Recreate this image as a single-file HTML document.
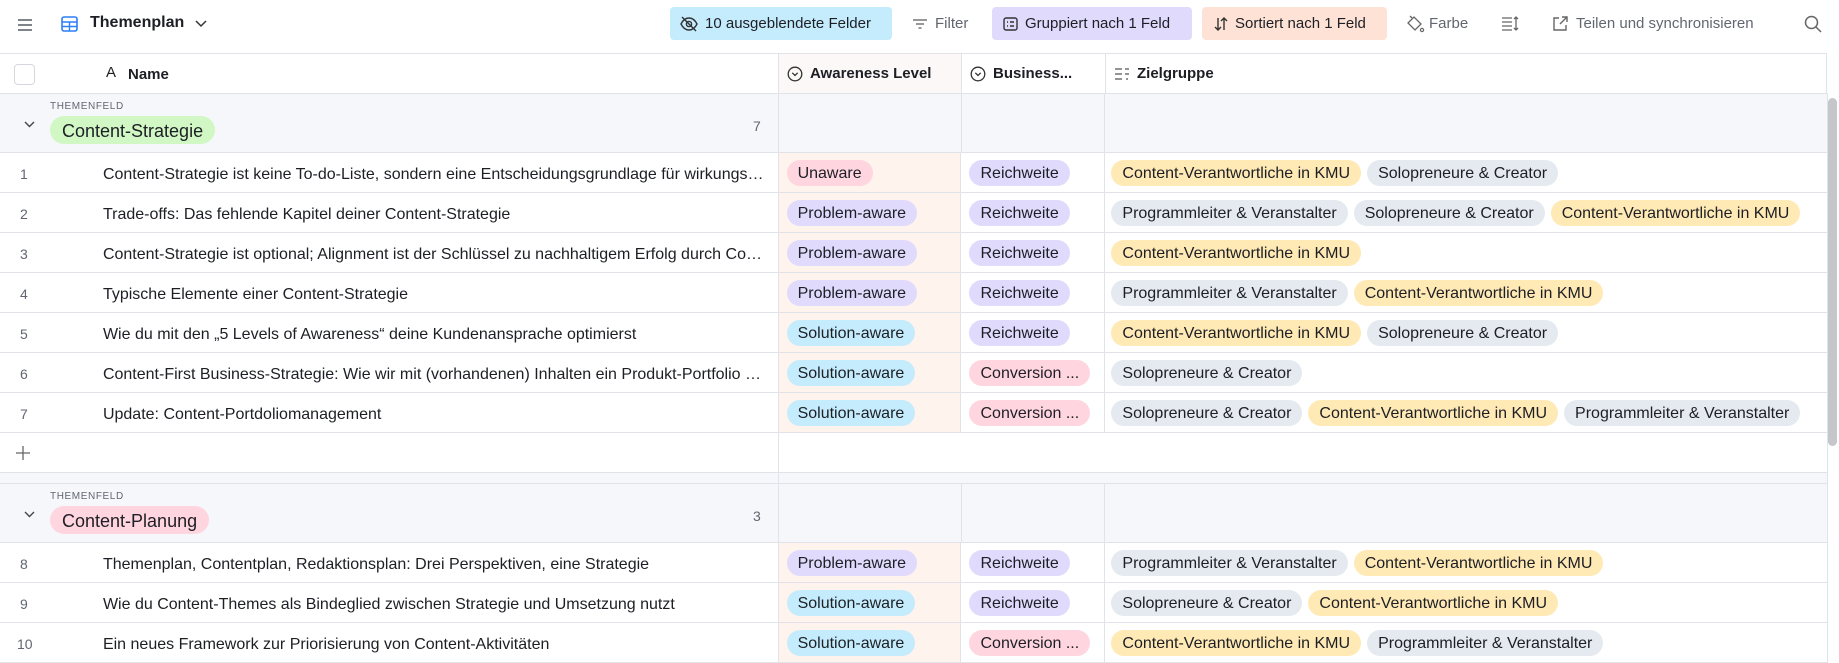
<!DOCTYPE html>
<html><head><meta charset="utf-8"><style>
*{box-sizing:border-box;margin:0;padding:0}
body{width:1839px;height:663px;overflow:hidden;background:#fff;font-family:"Liberation Sans",sans-serif;color:#1d1f25;position:relative;font-size:15px}
.abs{position:absolute}
.tb{position:absolute;top:7px;height:33px;border-radius:4px;display:flex;align-items:center;font-size:15px;color:#1d1f25;white-space:nowrap}
.tg{color:#616670}
.row{position:absolute;left:0;width:1827px;height:40px;border-bottom:1px solid #e1e3e8;display:flex}
.c{height:100%;display:flex;align-items:center;border-right:1px solid #e1e3e8;white-space:nowrap;overflow:hidden}
.num{width:103px;padding-left:20px;padding-top:3px;color:#616670;font-size:14px;border-right:none}
.nm{width:676px;font-size:16px;text-overflow:ellipsis;display:block;line-height:43px;padding-right:12px}
.aw{width:183px;background:#fff3ed;padding-left:8px}
.bu{width:144px;padding-left:8px}
.zg{width:722px;padding-left:6px;border-right:none}
.p{display:inline-block;height:26px;line-height:28px;border-radius:13px;padding:0 11px;font-size:16px;margin-right:6px;white-space:nowrap;color:#1d1f25}
.pk{background:#ffd5e0}.pu{background:#e0dafd}.bl{background:#c5ecfd}.ye{background:#ffe9b5}.gr{background:#e5e9f0}.gn{background:#d1f7c4}
.grp{position:absolute;left:0;width:1827px;height:60px;background:#f6f7fb;border-bottom:1px solid #e1e3e8;border-top:1px solid #e1e3e8}
.vl{position:absolute;top:0;bottom:0;width:1px;background:#e1e3e8}
</style></head><body>
<svg class="abs" style="left:17px;top:18px" width="16" height="14"><path d="M1 2h14M1 7h14M1 12h14" stroke="#555a63" stroke-width="1.6"/></svg>
<svg class="abs" style="left:61px;top:16px" width="17" height="16"><rect x="1" y="1" width="15" height="14" rx="2" fill="none" stroke="#2d7ff9" stroke-width="1.6"/><path d="M1 6h15M1 10.5h15M8.5 6v9" stroke="#2d7ff9" stroke-width="1.4"/></svg>
<div class="abs" style="left:90px;top:14px;font-weight:bold;font-size:16px">Themenplan</div>
<svg class="abs" style="left:195px;top:20px" width="12" height="8"><path d="M1 1l5 5 5-5" fill="none" stroke="#333" stroke-width="1.5"/></svg>

<div class="tb" style="left:670px;width:222px;background:#c4ecfd;padding-left:10px">
<svg width="18" height="16" style="margin-right:7px"><path d="M1 8c2-4 5-6 8-6s6 2 8 6c-2 4-5 6-8 6s-6-2-8-6z" fill="none" stroke="#333" stroke-width="1.4"/><circle cx="9" cy="8" r="2.6" fill="none" stroke="#333" stroke-width="1.4"/><path d="M2 1l14 14" stroke="#333" stroke-width="1.4"/></svg>10 ausgeblendete Felder</div>
<div class="tb tg" style="left:912px"><svg width="16" height="12" style="margin-right:7px"><path d="M1 2h14M4 6h8M6.5 10h3" stroke="#777" stroke-width="1.4"/></svg>Filter</div>
<div class="tb" style="left:992px;width:200px;background:#e0dafd;padding-left:11px"><svg width="15" height="14" style="margin-right:7px"><rect x="1" y="1" width="13" height="12" rx="2" fill="none" stroke="#333" stroke-width="1.4"/><path d="M4 5h1M7 5h4M4 9h1M7 9h4" stroke="#333" stroke-width="1.4"/></svg>Gruppiert nach 1 Feld</div>
<div class="tb" style="left:1202px;width:185px;background:#fee2d5;padding-left:11px"><svg width="16" height="16" style="margin-right:6px"><path d="M5 2v12M2 11l3 3 3-3M11 14V2M8 5l3-3 3 3" fill="none" stroke="#333" stroke-width="1.4"/></svg>Sortiert nach 1 Feld</div>
<div class="tb tg" style="left:1405px"><svg width="20" height="18" style="margin-right:4px"><path d="M3 8l6-6 7 7-6 6z" fill="none" stroke="#666" stroke-width="1.3"/><path d="M7 3L5 1" stroke="#666" stroke-width="1.3"/><circle cx="17" cy="15" r="1.6" fill="none" stroke="#666" stroke-width="1.2"/></svg>Farbe</div>
<svg class="abs" style="left:1501px;top:16px" width="18" height="15"><path d="M1 2h10M1 6h10M1 10h10M1 14h10M15 1v13M13 3l2-2 2 2M13 12l2 2 2-2" fill="none" stroke="#666" stroke-width="1.3"/></svg>
<div class="tb tg" style="left:1552px"><svg width="17" height="17" style="margin-right:7px"><path d="M7 3H2v12h12v-5" fill="none" stroke="#666" stroke-width="1.4"/><path d="M10 2h5v5M15 2L8 9" fill="none" stroke="#666" stroke-width="1.4"/></svg>Teilen und synchronisieren</div>
<svg class="abs" style="left:1804px;top:15px" width="18" height="18"><circle cx="7.5" cy="7.5" r="6" fill="none" stroke="#666" stroke-width="1.5"/><path d="M12 12l5 5" stroke="#666" stroke-width="1.5"/></svg>

<div class="abs" style="left:0;top:53px;width:1827px;height:41px;border-top:1px solid #e1e3e8;border-bottom:1px solid #d5d8de;display:flex;font-weight:bold;font-size:15px">
 <div class="c" style="width:779px;position:relative"><div class="abs" style="left:14px;top:10px;width:21px;height:21px;border:1px solid #d5d8de;border-radius:4px"></div><span class="abs" style="left:106px;top:10px;font-weight:normal;font-size:15px">A</span><span class="abs" style="left:128px;top:12px">Name</span></div>
 <div class="c" style="width:183px;background:#fbf8f7;padding-left:8px"><svg width="16" height="16" style="margin-right:7px"><circle cx="8" cy="8" r="6.8" fill="none" stroke="#333" stroke-width="1.3"/><path d="M5.3 6.8l2.7 2.7 2.7-2.7" fill="none" stroke="#333" stroke-width="1.3"/></svg>Awareness Level</div>
 <div class="c" style="width:144px;padding-left:8px"><svg width="16" height="16" style="margin-right:7px"><circle cx="8" cy="8" r="6.8" fill="none" stroke="#333" stroke-width="1.3"/><path d="M5.3 6.8l2.7 2.7 2.7-2.7" fill="none" stroke="#333" stroke-width="1.3"/></svg>Business...</div>
 <div class="c" style="width:721px;padding-left:8px;border-right:1px solid #e1e3e8"><svg width="16" height="14" style="margin-right:7px"><path d="M1 2h7M1 7h7M1 12h7M11 2h4M11 7h4M12 12h2" stroke="#555" stroke-width="1.3"/></svg>Zielgruppe</div>
</div>

<div class="grp" style="top:93px">
 <div class="vl" style="left:778px"></div><div class="vl" style="left:961px"></div><div class="vl" style="left:1104px"></div>
 <div class="abs" style="left:50px;top:7px;font-size:10px;letter-spacing:.6px;color:#616670">THEMENFELD</div>
 <svg class="abs" style="left:24px;top:27px" width="11" height="7"><path d="M1 1l4.5 4.5L10 1" fill="none" stroke="#444" stroke-width="1.4"/></svg>
 <div class="abs p gn" style="left:50px;top:22px;height:28px;line-height:30px;font-size:18px;border-radius:14px;padding:0 12px">Content-Strategie</div>
 <div class="abs" style="left:753px;top:24px;color:#616670;font-size:14px">7</div>
</div>

<div class="row" style="top:153px"><div class="c num">1</div><div class="c nm">Content-Strategie ist keine To-do-Liste, sondern eine Entscheidungsgrundlage für wirkungsvolle Inhalte</div><div class="c aw"><span class="p pk">Unaware</span></div><div class="c bu"><span class="p pu">Reichweite</span></div><div class="c zg"><span class="p ye">Content-Verantwortliche in KMU</span><span class="p gr">Solopreneure &amp; Creator</span></div></div>
<div class="row" style="top:193px"><div class="c num">2</div><div class="c nm">Trade-offs: Das fehlende Kapitel deiner Content-Strategie</div><div class="c aw"><span class="p pu">Problem-aware</span></div><div class="c bu"><span class="p pu">Reichweite</span></div><div class="c zg"><span class="p gr">Programmleiter &amp; Veranstalter</span><span class="p gr">Solopreneure &amp; Creator</span><span class="p ye">Content-Verantwortliche in KMU</span></div></div>
<div class="row" style="top:233px"><div class="c num">3</div><div class="c nm">Content-Strategie ist optional; Alignment ist der Schlüssel zu nachhaltigem Erfolg durch Content</div><div class="c aw"><span class="p pu">Problem-aware</span></div><div class="c bu"><span class="p pu">Reichweite</span></div><div class="c zg"><span class="p ye">Content-Verantwortliche in KMU</span></div></div>
<div class="row" style="top:273px"><div class="c num">4</div><div class="c nm">Typische Elemente einer Content-Strategie</div><div class="c aw"><span class="p pu">Problem-aware</span></div><div class="c bu"><span class="p pu">Reichweite</span></div><div class="c zg"><span class="p gr">Programmleiter &amp; Veranstalter</span><span class="p ye">Content-Verantwortliche in KMU</span></div></div>
<div class="row" style="top:313px"><div class="c num">5</div><div class="c nm">Wie du mit den „5 Levels of Awareness“ deine Kundenansprache optimierst</div><div class="c aw"><span class="p bl">Solution-aware</span></div><div class="c bu"><span class="p pu">Reichweite</span></div><div class="c zg"><span class="p ye">Content-Verantwortliche in KMU</span><span class="p gr">Solopreneure &amp; Creator</span></div></div>
<div class="row" style="top:353px"><div class="c num">6</div><div class="c nm">Content-First Business-Strategie: Wie wir mit (vorhandenen) Inhalten ein Produkt-Portfolio entwickeln</div><div class="c aw"><span class="p bl">Solution-aware</span></div><div class="c bu"><span class="p pk">Conversion ...</span></div><div class="c zg"><span class="p gr">Solopreneure &amp; Creator</span></div></div>
<div class="row" style="top:393px"><div class="c num">7</div><div class="c nm">Update: Content-Portdoliomanagement</div><div class="c aw"><span class="p bl">Solution-aware</span></div><div class="c bu"><span class="p pk">Conversion ...</span></div><div class="c zg"><span class="p gr">Solopreneure &amp; Creator</span><span class="p ye">Content-Verantwortliche in KMU</span><span class="p gr">Programmleiter &amp; Veranstalter</span></div></div>
<div class="row" style="top:433px"><div class="c" style="width:779px;padding-left:16px"><svg width="14" height="14"><path d="M7 0v14M0 7h14" stroke="#666" stroke-width="1.3"/></svg></div></div>
<div class="abs" style="left:0;top:473px;width:1827px;height:10px;background:#f6f7fb"><div class="vl" style="left:778px"></div></div>

<div class="grp" style="top:483px">
 <div class="vl" style="left:778px"></div><div class="vl" style="left:961px"></div><div class="vl" style="left:1104px"></div>
 <div class="abs" style="left:50px;top:7px;font-size:10px;letter-spacing:.6px;color:#616670">THEMENFELD</div>
 <svg class="abs" style="left:24px;top:27px" width="11" height="7"><path d="M1 1l4.5 4.5L10 1" fill="none" stroke="#444" stroke-width="1.4"/></svg>
 <div class="abs p pk" style="left:50px;top:22px;height:28px;line-height:30px;font-size:18px;border-radius:14px;padding:0 12px">Content-Planung</div>
 <div class="abs" style="left:753px;top:24px;color:#616670;font-size:14px">3</div>
</div>
<div class="row" style="top:543px"><div class="c num">8</div><div class="c nm">Themenplan, Contentplan, Redaktionsplan: Drei Perspektiven, eine Strategie</div><div class="c aw"><span class="p pu">Problem-aware</span></div><div class="c bu"><span class="p pu">Reichweite</span></div><div class="c zg"><span class="p gr">Programmleiter &amp; Veranstalter</span><span class="p ye">Content-Verantwortliche in KMU</span></div></div>
<div class="row" style="top:583px"><div class="c num">9</div><div class="c nm">Wie du Content-Themes als Bindeglied zwischen Strategie und Umsetzung nutzt</div><div class="c aw"><span class="p bl">Solution-aware</span></div><div class="c bu"><span class="p pu">Reichweite</span></div><div class="c zg"><span class="p gr">Solopreneure &amp; Creator</span><span class="p ye">Content-Verantwortliche in KMU</span></div></div>
<div class="row" style="top:623px"><div class="c num" style="padding-left:17px">10</div><div class="c nm">Ein neues Framework zur Priorisierung von Content-Aktivitäten</div><div class="c aw"><span class="p bl">Solution-aware</span></div><div class="c bu"><span class="p pk">Conversion ...</span></div><div class="c zg"><span class="p ye">Content-Verantwortliche in KMU</span><span class="p gr">Programmleiter &amp; Veranstalter</span></div></div>

<div class="abs" style="left:1827px;top:93px;width:12px;height:570px;background:#fff;border-left:1px solid #e1e3e8"></div>
<div class="abs" style="left:1828px;top:98px;width:9px;height:348px;background:#c4c6ca;border-radius:5px"></div>
</body></html>
